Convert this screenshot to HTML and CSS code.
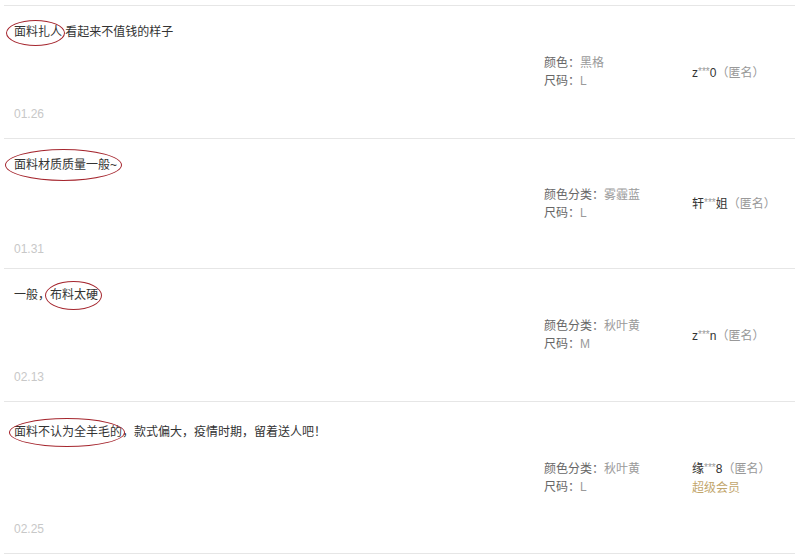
FILE: index.html
```html
<!DOCTYPE html>
<html lang="zh-CN">
<head>
    <meta charset="UTF-8">
    <meta name="viewport" content="width=device-width, initial-scale=1.0">
    <title>累计评价</title>
    <link rel="stylesheet" href="styles.css">
</head>
<body>

    <div class="review-list">

        <div class="review">
            <div class="review-main">
                <p class="review-text"><span class="mark mark-1">面料扎人</span> 看起来不值钱的样子</p>
                <p class="review-date">01.26</p>
            </div>
            <div class="review-sku">
                <p>颜色：<span>黑格</span></p>
                <p>尺码：<span>L</span></p>
            </div>
            <div class="review-user">
                <p>z<span class="stars">***</span>0<span class="anon">（匿名）</span></p>
            </div>
        </div>

        <div class="review review-short">
            <div class="review-main">
                <p class="review-text"><span class="mark mark-2">面料材质质量一般~</span></p>
                <p class="review-date">01.31</p>
            </div>
            <div class="review-sku">
                <p>颜色分类：<span>雾霾蓝</span></p>
                <p>尺码：<span>L</span></p>
            </div>
            <div class="review-user">
                <p>轩<span class="stars">***</span>姐<span class="anon">（匿名）</span></p>
            </div>
        </div>

        <div class="review">
            <div class="review-main">
                <p class="review-text">一般，<span class="mark mark-3">布料太硬</span></p>
                <p class="review-date">02.13</p>
            </div>
            <div class="review-sku">
                <p>颜色分类：<span>秋叶黄</span></p>
                <p>尺码：<span>M</span></p>
            </div>
            <div class="review-user">
                <p>z<span class="stars">***</span>n<span class="anon">（匿名）</span></p>
            </div>
        </div>

        <div class="review review-tall">
            <div class="review-main">
                <p class="review-text"><span class="mark mark-4">面料不认为全羊毛的</span>，款式偏大，疫情时期，留着送人吧！</p>
                <p class="review-date">02.25</p>
            </div>
            <div class="review-sku">
                <p>颜色分类：<span>秋叶黄</span></p>
                <p>尺码：<span>L</span></p>
            </div>
            <div class="review-user">
                <p>缘<span class="stars">***</span>8<span class="anon">（匿名）</span></p>
                <p class="vip">超级会员</p>
            </div>
        </div>

    </div>

</body>
</html>
```

FILE: styles.css
```css
/* General */
body {
    margin: 0;
    background: #ffffff;
    font-family: "Liberation Sans", "Noto Sans CJK SC", sans-serif;
    font-size: 12px;
    color: #333333;
}

p {
    margin: 0;
}

/* Review list */
.review-list {
    margin: 5px 9px 0 4px;
    border-top: 1px solid #e6e6e6;
}

.review {
    display: grid;
    grid-template-columns: 540px 148px 1fr;
    align-items: center;
    min-height: 132px;
    border-bottom: 1px solid #e6e6e6;
}

.review-short {
    min-height: 129px;
}

.review-tall {
    min-height: 151px;
}

.review-main {
    align-self: stretch;
    display: flex;
    flex-direction: column;
    justify-content: space-between;
    padding: 17px 10px 16px;
}

.review-short .review-main {
    padding-bottom: 11px;
}

.review-tall .review-main {
    padding-top: 21px;
}

.review-text {
    line-height: 18px;
    color: #333333;
}

.review-date {
    line-height: 16px;
    color: #c8c8c8;
}

/* Red circle drawn over the key phrase */
.mark {
    position: relative;
}

.mark::after {
    content: "";
    position: absolute;
    border: 1.5px solid #a5262e;
    border-radius: 50%;
}

.mark-1::after {
    left: -8px;
    right: -3px;
    top: -5px;
    bottom: -7px;
}

.mark-2::after {
    left: -9px;
    right: -5px;
    top: -9px;
    bottom: -9px;
}

.mark-3::after {
    left: -5px;
    right: -4px;
    top: -7px;
    bottom: -8px;
}

.mark-4::after {
    left: -5px;
    right: -3px;
    top: -7px;
    bottom: -8px;
}

/* SKU column */
.review-sku p {
    line-height: 18px;
    color: #666666;
}

.review-sku span {
    color: #9a9a9a;
}

/* User column */
.review-user p {
    line-height: 19px;
    color: #333333;
}

.review-user .stars {
    color: #999999;
    font-size: 10px;
    vertical-align: 2px;
}

.review-user .anon {
    color: #999999;
}

.review-user .vip {
    color: #c2a66c;
}
```
